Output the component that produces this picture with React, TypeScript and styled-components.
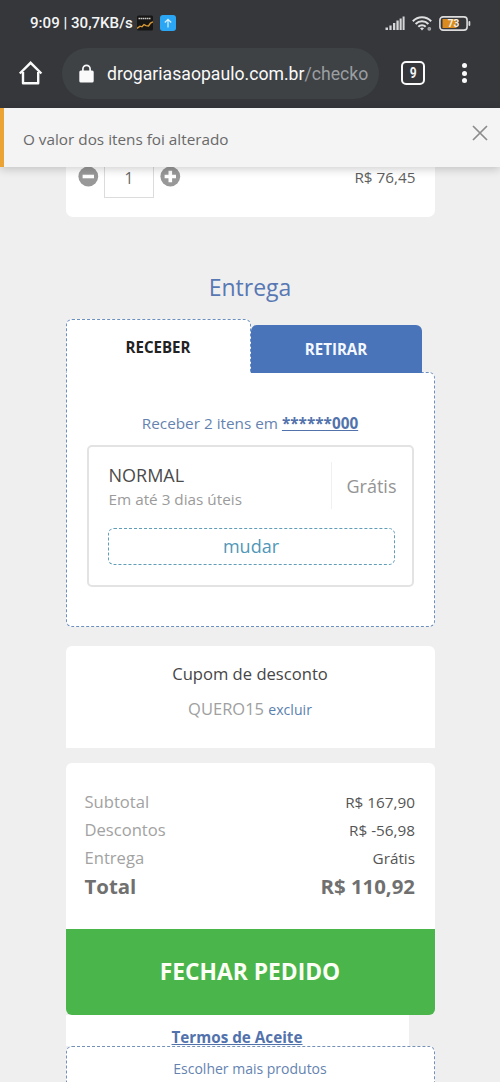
import React from 'react';
import styled, { createGlobalStyle } from 'styled-components';

const Global = createGlobalStyle`
  * { box-sizing: border-box; }
  html, body { margin: 0; padding: 0; background: #efefef; }
  body { font-family: 'Open Sans', 'Noto Sans', sans-serif; overflow: hidden; }
`;

const Screen = styled.div`
  width: 500px;
  height: 1082px;
  overflow: hidden;
  display: flex;
  flex-direction: column;
  background: #efefef;
`;

const Browser = styled.header`
  flex: none;
  height: 108px;
  background: #35373a;
  font-family: Roboto, sans-serif;
  color: #f4f5f6;
`;

const StatusBar = styled.div`
  height: 46px;
  padding: 0 29px 0 30px;
  display: flex;
  align-items: center;
  justify-content: space-between;
`;

const StatusGroup = styled.div<{ $gap: number }>`
  display: flex;
  align-items: center;
  gap: ${p => p.$gap}px;
`;

const Clock = styled.span`
  font-size: 15.1px;
  font-weight: 500;
  line-height: 20px;
  white-space: pre;
  width: 100px;
`;

const AddressRow = styled.div`
  height: 52px;
  margin-top: 1px;
  display: flex;
  align-items: center;
  padding: 0 27px 0 18px;
`;

const AddressPill = styled.div`
  width: 317px;
  height: 51px;
  margin-left: 18px;
  padding-left: 17px;
  border-radius: 26px;
  background: #3e4245;
  display: flex;
  align-items: center;
`;

const Url = styled.span`
  margin-left: 13px;
  font-size: 17.65px;
  line-height: 22px;
  padding-top: 1px;
  color: #fafafa;
  white-space: nowrap;
`;

const UrlPath = styled.span`
  color: #9b9ea1;
`;

const TabCount = styled.div`
  width: 24px;
  height: 24px;
  margin-left: 22px;
  border: 2px solid #fafafa;
  border-radius: 5px;
  display: flex;
  align-items: center;
  justify-content: center;
  font-size: 15px;
  font-weight: 700;
`;

const TabDigit = styled.span`
  transform: scaleX(0.8);
`;

const Kebab = styled.div`
  margin-left: auto;
  width: 18px;
  display: flex;
  flex-direction: column;
  align-items: center;
  gap: 2.6px;
`;

const Dot = styled.i`
  width: 5px;
  height: 5px;
  border-radius: 50%;
  background: #fafafa;
`;

const Notice = styled.div`
  position: relative;
  z-index: 1;
  flex: none;
  height: 59px;
  padding: 0 12px 0 19px;
  border-left: 4px solid #eca336;
  background: #f4f4f4;
  box-shadow: 0 2px 9px rgba(0, 0, 0, 0.2);
  display: flex;
  justify-content: space-between;
`;

const NoticeText = styled.span`
  font-size: 15.3px;
  line-height: 62px;
  color: #696969;
`;

const CloseIcon = styled.svg`
  margin-top: 17px;
`;

const Page = styled.main`
  flex: 1;
  min-height: 0;
  padding: 0 65px;
  margin-left: 0.5px;
  display: flex;
  flex-direction: column;
`;

const ProductCard = styled.section`
  flex: none;
  width: 369px;
  height: 50px;
  padding: 0 19px 0 12px;
  border-radius: 0 0 7px 7px;
  background: #fff;
  display: flex;
  align-items: flex-start;
`;

const QtyIcon = styled.svg`
  margin-top: -1px;
`;

const Quantity = styled.div`
  width: 50px;
  height: 41px;
  margin: -10px 6px 0 5.5px;
  border: 1px solid #dcdcdc;
  text-align: center;
  font-size: 15.5px;
  line-height: 41px;
  color: #666;
`;

const ProductPrice = styled.span`
  margin-left: auto;
  font-size: 15.3px;
  line-height: 21px;
  color: #5e5e5e;
`;

const Heading = styled.h2`
  flex: none;
  width: 369px;
  margin: 54px 0 0;
  height: 48px;
  text-align: center;
  font-size: 23px;
  font-weight: 400;
  line-height: 32px;
  color: #5878b4;
`;

const Tabs = styled.div`
  flex: none;
  height: 54px;
  display: flex;
  align-items: flex-end;
  position: relative;
  z-index: 1;
`;

const ActiveTab = styled.div`
  width: 185px;
  height: 54px;
  border: 1px dashed #6b8fc0;
  border-bottom: 0;
  border-radius: 6px 6px 0 0;
  background: #fff;
  text-align: center;
  font-size: 15.1px;
  font-weight: 700;
  line-height: 54px;
  color: #222;
`;

const IdleTab = styled.div`
  width: 171px;
  height: 48px;
  border-radius: 6px 6px 0 0;
  background: #4974ba;
  text-align: center;
  font-size: 15.1px;
  font-weight: 700;
  line-height: 48px;
  color: #f5f8ff;
`;

const DeliveryPanel = styled.section`
  flex: none;
  width: 369px;
  height: 255px;
  margin-top: -1px;
  padding: 39px 20px 0;
  border: 1px dashed #6b8fc0;
  border-radius: 0 6px 6px 6px;
  background: #fff;
`;

const Receive = styled.p`
  margin: 0;
  height: 33px;
  text-align: center;
  font-size: 15.3px;
  line-height: 22px;
  color: #6583b0;
`;

const StrongLink = styled.a`
  font-weight: 700;
  color: #5272ac;
  text-decoration: underline;
`;

const OptionCard = styled.div`
  height: 142px;
  padding: 15px 17px 0 19px;
  border: 2px solid #e3e3e3;
  border-radius: 5px;
`;

const OptionTop = styled.div`
  display: flex;
  justify-content: space-between;
  height: 47px;
`;

const OptionName = styled.div`
  padding-left: 1px;
  font-size: 18px;
  line-height: 26px;
  color: #4b4b4b;
`;

const OptionTime = styled.div`
  padding-left: 1px;
  font-size: 15.3px;
  line-height: 22px;
  color: #9b9b9b;
`;

const OptionPrice = styled.div`
  width: 81px;
  border-left: 1px solid #f0f0f0;
  padding-left: 15px;
  margin-right: -17px;
  font-size: 18px;
  line-height: 48px;
  color: #949494;
`;

const ChangeButton = styled.button`
  display: block;
  width: 287px;
  height: 37px;
  margin: 19px 0 0;
  padding: 0;
  border: 1px dashed #5f9db8;
  border-radius: 6px;
  background: #fff;
  font: 400 18px/33px 'Open Sans', sans-serif;
  color: #5097b8;
`;

const CouponCard = styled.section`
  flex: none;
  width: 369px;
  height: 102px;
  margin-top: 19px;
  padding-top: 16px;
  border-radius: 6px 6px 0 0;
  background: #fff;
  text-align: center;
`;

const CouponTitle = styled.div`
  font-size: 16.6px;
  line-height: 24px;
  color: #464646;
`;

const CouponCode = styled.div`
  margin-top: 11px;
  font-size: 16.5px;
  line-height: 24px;
  color: #a0a0a0;
`;

const Remove = styled.a`
  font-size: 14.1px;
  color: #5b7fae;
`;

const Summary = styled.section`
  flex: none;
  width: 369px;
  height: 166px;
  margin-top: 15px;
  padding: 25px 19.5px 0 19px;
  border-radius: 6px 6px 0 0;
  background: #fff;
`;

const SummaryRow = styled.div`
  display: flex;
  justify-content: space-between;
  height: 28px;
  line-height: 28px;
`;

const RowLabel = styled.span`
  font-size: 16.6px;
  color: #a2a2a2;
`;

const RowValue = styled.span`
  font-size: 15.3px;
  color: #555;
`;

const TotalText = styled.span`
  font-size: 20.4px;
  line-height: 28px;
  font-weight: 700;
  color: #707070;
`;

const Checkout = styled.button`
  flex: none;
  width: 369px;
  height: 86px;
  border: 0;
  padding: 0;
  border-radius: 0 0 6px 6px;
  background: #4ab54a;
  font: 700 22.8px/86px 'Open Sans', sans-serif;
  color: #fbfff5;
`;

const Terms = styled.div`
  flex: none;
  width: 343px;
  height: 31px;
  padding-left: 106px;
  background: #fff;
  font-size: 15.25px;
  line-height: 44px;
  white-space: nowrap;
`;

const MoreProducts = styled.div`
  flex: none;
  width: 369px;
  height: 60px;
  border: 1px dashed #7390b8;
  border-radius: 6px;
  background: #fff;
  text-align: center;
  font-size: 14px;
  line-height: 43px;
  color: #6583b0;
`;

function TrendIcon() {
  return (
    <svg width="16" height="16" viewBox="0 0 16 16">
      <rect width="16" height="15" y="0.5" rx="1.5" fill="#171614" />
      <path d="M1.500 3.500h12" stroke="#c9c9c9" strokeWidth="1.400" strokeDasharray="1.600 .5" />
      <path d="M0 13.500l3-2.300 2 .6 2-2.200 2 1 2.500.4 2-3 2.500-1.200" fill="none" stroke="#d99a36" strokeWidth="1.400" />
    </svg>
  );
}

function UploadIcon() {
  return (
    <svg width="16" height="16" viewBox="0 0 16 16">
      <rect width="16" height="16" rx="3" fill="#2ba6f5" />
      <path d="M8 12.500v-8M4.800 7.500L8 4.300l3.200 3.200" fill="none" stroke="#d8f0ff" strokeWidth="1.200" />
    </svg>
  );
}

function SignalIcon() {
  return (
    <svg width="20" height="15" viewBox="0 0 20 15" fill="#d5d6d7">
      <rect x="0.500" y="11.500" width="2.500" height="2.500" />
      <rect x="4.400" y="9.500" width="2.200" height="4.500" />
      <rect x="8" y="7" width="2.300" height="7" />
      <rect x="11.400" y="4.500" width="2.300" height="9.500" />
      <rect x="14.600" y="2.500" width="2.100" height="11.500" />
      <rect x="17.600" y="0.500" width="2" height="13.500" />
    </svg>
  );
}

function WifiIcon() {
  return (
    <svg width="20" height="15" viewBox="0 0 20 15" fill="none" stroke="#dedfe0" strokeWidth="2">
      <path d="M.8 5.300C6-.1 14-.1 19.200 5.300M3.600 8c3.600-3.700 9.200-3.700 12.800 0M6.300 10.700c2-2.100 5.400-2.100 7.400 0" />
      <path d="M8 12.200c1.100-1.100 2.900-1.100 4 0l-2 2.200z" fill="#dedfe0" stroke="none" />
      <circle cx="17.300" cy="12.800" r="1.300" fill="#8b8c8e" stroke="#a8a9ab" strokeWidth="1.200" />
    </svg>
  );
}

function BatteryIcon() {
  return (
    <svg width="32" height="15" viewBox="0 0 32 15">
      <rect x="0.900" y="0.900" width="27.200" height="13.200" rx="3.200" fill="none" stroke="#dcdcdc" strokeWidth="1.600" />
      <path d="M3.500 3h14v9h-14z" fill="#d98c1d" />
      <rect x="29.500" y="5" width="1.800" height="5" rx="0.900" fill="#dcdcdc" />
      <text x="14.500" y="11.400" textAnchor="middle" fontFamily="Roboto, sans-serif" fontSize="10" fontWeight="700" fill="#f5f0e6">73</text>
    </svg>
  );
}

function HomeIcon() {
  return (
    <svg width="26" height="26" viewBox="0 0 26 26" fill="none" stroke="#fafafa" strokeWidth="2.400" strokeLinejoin="round">
      <path d="M5 12v11.200h15.200V12" />
      <path d="M1.800 13.500L12.600 2.800l10.800 10.700" strokeLinejoin="miter" />
    </svg>
  );
}

function LockIcon() {
  return (
    <svg width="15" height="19" viewBox="0 0 15 19">
      <rect x="0.300" y="6.500" width="14.400" height="12" rx="1.600" fill="#fafafa" />
      <path d="M3.900 7.500V5a3.600 3.600 0 0 1 7.200 0v2.500" fill="none" stroke="#fafafa" strokeWidth="1.700" />
    </svg>
  );
}

function QtyGlyph({ plus }: { plus?: boolean }) {
  return (
    <QtyIcon width="21" height="21" viewBox="0 0 21 21">
      <circle cx="10.300" cy="10.500" r="9.900" fill="#989898" />
      <path d={plus ? 'M4.600 10.500h11.400M10.300 4.800v11.400' : 'M4.600 10.500h11.400'} stroke="#fff" strokeWidth="3.600" />
    </QtyIcon>
  );
}

export default function App() {
  return (
    <Screen>
      <Global />
      <Browser>
        <StatusBar>
          <StatusGroup $gap={7}>
            <Clock>9:09 | 30,7KB/s</Clock>
            <TrendIcon />
            <UploadIcon />
          </StatusGroup>
          <StatusGroup $gap={7}>
            <SignalIcon />
            <WifiIcon />
            <BatteryIcon />
          </StatusGroup>
        </StatusBar>
        <AddressRow>
          <HomeIcon />
          <AddressPill>
            <LockIcon />
            <Url>drogariasaopaulo.com.br<UrlPath>/checko</UrlPath></Url>
          </AddressPill>
          <TabCount><TabDigit>9</TabDigit></TabCount>
          <Kebab><Dot /><Dot /><Dot /></Kebab>
        </AddressRow>
      </Browser>
      <Notice>
        <NoticeText>O valor dos itens foi alterado</NoticeText>
        <CloseIcon width="16" height="16" viewBox="0 0 16 16">
          <path d="M1 1l14 14M15 1L1 15" stroke="#8c8c8c" strokeWidth="1.700" />
        </CloseIcon>
      </Notice>
      <Page>
        <ProductCard>
          <QtyGlyph />
          <Quantity>1</Quantity>
          <QtyGlyph plus />
          <ProductPrice>R$ 76,45</ProductPrice>
        </ProductCard>
        <Heading>Entrega</Heading>
        <Tabs>
          <ActiveTab>RECEBER</ActiveTab>
          <IdleTab>RETIRAR</IdleTab>
        </Tabs>
        <DeliveryPanel>
          <Receive>Receber 2 itens em <StrongLink>******000</StrongLink></Receive>
          <OptionCard>
            <OptionTop>
              <div>
                <OptionName>NORMAL</OptionName>
                <OptionTime>Em até 3 dias úteis</OptionTime>
              </div>
              <OptionPrice>Grátis</OptionPrice>
            </OptionTop>
            <ChangeButton>mudar</ChangeButton>
          </OptionCard>
        </DeliveryPanel>
        <CouponCard>
          <CouponTitle>Cupom de desconto</CouponTitle>
          <CouponCode>QUERO15 <Remove>excluir</Remove></CouponCode>
        </CouponCard>
        <Summary>
          <SummaryRow><RowLabel>Subtotal</RowLabel><RowValue>R$ 167,90</RowValue></SummaryRow>
          <SummaryRow><RowLabel>Descontos</RowLabel><RowValue>R$ -56,98</RowValue></SummaryRow>
          <SummaryRow><RowLabel>Entrega</RowLabel><RowValue>Grátis</RowValue></SummaryRow>
          <SummaryRow><TotalText>Total</TotalText><TotalText>R$ 110,92</TotalText></SummaryRow>
        </Summary>
        <Checkout>FECHAR PEDIDO</Checkout>
        <Terms><StrongLink>Termos de Aceite</StrongLink></Terms>
        <MoreProducts>Escolher mais produtos</MoreProducts>
      </Page>
    </Screen>
  );
}
